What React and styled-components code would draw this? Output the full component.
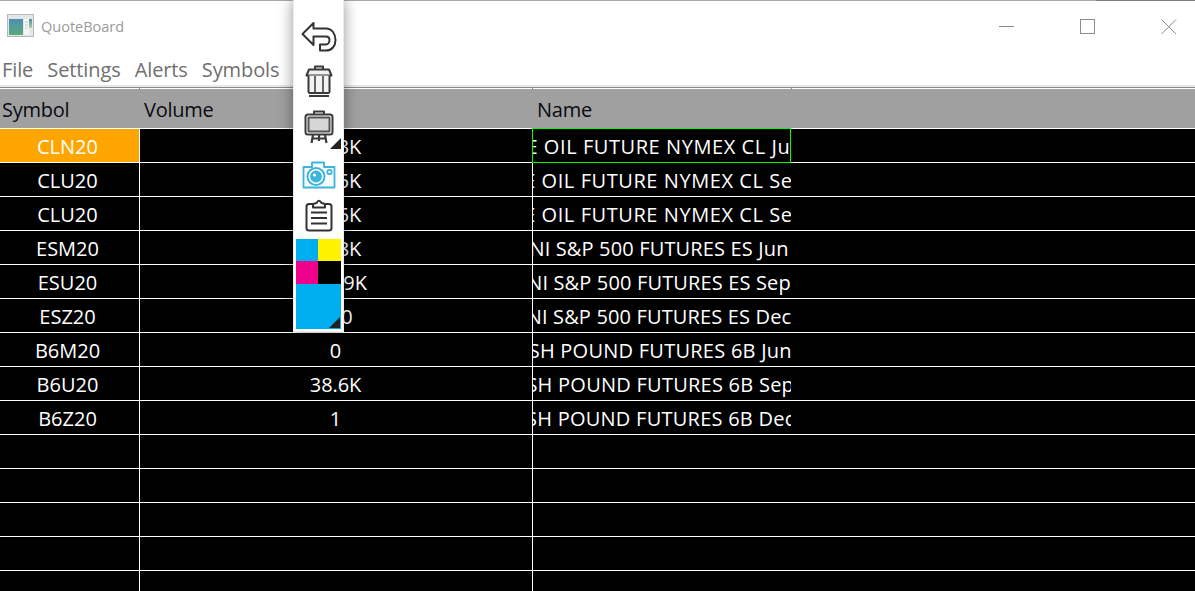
import styled, { createGlobalStyle } from "styled-components";

const GlobalStyle = createGlobalStyle`
    html, body {
        margin: 0;
        padding: 0;
        height: 100%;
        overflow: hidden;
        background: #fff;
    }
    * {
        box-sizing: border-box;
    }
`

const Window = styled.div`
    position: relative;
    display: flex;
    flex-direction: column;
    width: 1195px;
    height: 591px;
    overflow: hidden;
    font-family: "Open Sans", "Noto Sans", sans-serif;
`

const TopEdge = styled.div`
    height: 1px;
    flex: none;
    background: linear-gradient(90deg, #a8a8a8 1096px, #7f7f7f 1096px);
`

const TitleBar = styled.div`
    display: flex;
    align-items: center;
    height: 52px;
    flex: none;
    padding-left: 7px;
`

const AppLogo = styled.svg`
    display: block;
    margin-bottom: 3px;
`

const AppTitle = styled.span`
    margin-left: 7px;
    margin-bottom: 2px;
    font-size: 14.5px;
    color: #9a9a9a;
`

const WindowButtons = styled.div`
    display: flex;
    align-items: center;
    gap: 65px;
    margin-left: auto;
    padding-right: 18px;

    svg {
        display: block;
    }
`

const MenuBar = styled.div`
    display: flex;
    align-items: center;
    gap: 14px;
    height: 34px;
    flex: none;
    padding-left: 2px;
    font-size: 20px;
    letter-spacing: -0.1px;
    color: #6f6f6f;
    border-bottom: 2px solid #e8e8e8;
`

const MenuItem = styled.span`
    display: block;
`

const columns = "139px 393px 259px 1fr";

const HeaderEdge = styled.div`
    display: grid;
    grid-template-columns: ${columns};
    height: 2px;
    flex: none;
    background: #fff;
    border-top: 1px solid #8c8c8c;
`

const EdgeTick = styled.div`
    border-left: ${(p) => (p.$first ? "none" : "1px solid #8c8c8c")};
`

const Row = styled.div`
    position: relative;
    display: grid;
    grid-template-columns: ${columns};
    height: 34px;
    flex: none;
    background: #000;
    border-bottom: 1px solid #fff;
`

const HeaderRow = styled(Row)`
    height: 40px;
    background: #a0a0a0;
`

const HeaderCell = styled.div`
    display: flex;
    align-items: center;
    padding-top: 2px;
    padding-left: ${(p) => p.$pad || 2}px;
    font-size: 20px;
    letter-spacing: -0.25px;
    color: #0a0a14;
`

const Cell = styled.div`
    display: flex;
    align-items: center;
    justify-content: center;
    overflow: hidden;
    white-space: nowrap;
    font-size: 20px;
    color: #fff;
    letter-spacing: ${(p) => p.$spacing || 0}px;
    padding-top: 2px;
    padding-left: ${(p) => p.$nudge || 0}px;
    padding-right: ${(p) => p.$shift || 0}px;
    border-left: ${(p) => (p.$line ? "1px solid #fff" : "none")};
    background: ${(p) => (p.$active ? "#ffa500" : "transparent")};
`

const FocusFrame = styled.div`
    position: absolute;
    grid-column: 3 / 4;
    grid-row: 1;
    inset: -1px 0 -1px 0;
    border: 1px solid #00ff00;
    pointer-events: none;
`

const Toolbar = styled.div`
    position: absolute;
    top: 0;
    left: 293px;
    display: flex;
    flex-direction: column;
    align-items: center;
    width: 51px;
    height: 332px;
    padding: 21px 2px 0;
    background: #fff;
    border: 1px solid #ececec;
    border-top: none;
    box-shadow: 0 0 14px rgba(0, 0, 0, 0.42);
`

const ToolIcon = styled.div`
    position: relative;
    display: flex;
    justify-content: center;
    width: 100%;
    flex: none;
    margin-top: ${(p) => p.$top || 0}px;

    svg {
        display: block;
    }
`

const Corner = styled.span`
    position: absolute;
    right: ${(p) => p.$right}px;
    bottom: ${(p) => p.$bottom}px;
    width: 0;
    height: 0;
    border-left: 11px solid transparent;
    border-bottom: 11px solid #222;
`

const Swatches = styled.div`
    position: relative;
    display: grid;
    grid-template-columns: 22px 23px;
    grid-template-rows: 22px 23px 45px;
    width: 45px;
    flex: none;
    margin-top: 7px;
`

const Swatch = styled.div`
    background: ${(p) => p.$color};
    grid-column: ${(p) => (p.$wide ? "1 / 3" : "auto")};
`

// symbol, volume, name, letter spacing of the name, nudge of the name
const rows = [
    ["CLN20", "28.3K", "CRUDE OIL FUTURE NYMEX CL Jun 2020", 0.57, 3],
    ["CLU20", "10.5K", "CRUDE OIL FUTURE NYMEX CL Sep 2020", 0.57, 3],
    ["CLU20", "10.5K", "CRUDE OIL FUTURE NYMEX CL Sep 2020", 0.57, 3],
    ["ESM20", "71.8K", "E-MINI S&P 500 FUTURES ES Jun 2020", 0.15, 4],
    ["ESU20", "138.9K", "E-MINI S&P 500 FUTURES ES Sep 2020", 0.15, 4],
    ["ESZ20", "100", "E-MINI S&P 500 FUTURES ES Dec 2020", 0.15, 4],
    ["B6M20", "0", "BRITISH POUND FUTURES 6B Jun 2020", 0.25, 0],
    ["B6U20", "38.6K", "BRITISH POUND FUTURES 6B Sep 2020", 0.25, 0],
    ["B6Z20", "1", "BRITISH POUND FUTURES 6B Dec 2020", 0.25, 0],
    ["", "", "", 0, 0],
    ["", "", "", 0, 0],
    ["", "", "", 0, 0],
    ["", "", "", 0, 0],
    ["", "", "", 0, 0],
]

function AppIcon() {
    return (
        <AppLogo width="27" height="23" viewBox="0 0 27 23">
            <defs>
                <linearGradient id="pane" x1="0" y1="0" x2="0" y2="1">
                    <stop offset="0" stopColor="#4f8fb0" />
                    <stop offset="1" stopColor="#58ab7c" />
                </linearGradient>
                <linearGradient id="bar" x1="0" y1="0" x2="0" y2="1">
                    <stop offset="0" stopColor="#4f8f9f" />
                    <stop offset="1" stopColor="#a9cfa9" />
                </linearGradient>
            </defs>
            <rect x="0.5" y="0.5" width="26" height="22" fill="#e4e7e7" stroke="#b4b8b8" />
            <rect x="2" y="5" width="14" height="16" fill="url(#pane)" />
            <rect x="17" y="5" width="5" height="16" fill="#f4f6f4" />
            <path d="M18 8 H21 M18 11 H21 M18 14 H21" stroke="#c4cac6" />
            <rect x="22" y="5" width="3" height="9" fill="url(#bar)" />
        </AppLogo>
    )
}

function BackIcon() {
    return (
        <svg width="36" height="31" viewBox="0 0 36 31" fill="#fff" stroke="#333" strokeWidth="2" strokeLinejoin="round">
            <path d="M1.5 13 L12.5 2 V7.5 H25 C31 7.5 34.5 13 34.5 19 C34.5 25 31 29.5 25 29.5 H19 V23.5 H25 C27 23.5 28.5 21.5 28.5 19 C28.5 16.5 27 15.5 25 15.5 H12.5 V24 Z" />
        </svg>
    )
}

function TrashIcon() {
    return (
        <svg width="28" height="32" viewBox="0 0 28 32" fill="none" stroke="#3a3a3a" strokeWidth="2" strokeLinejoin="round">
            <path d="M10 4 V1.5 H18 V4" />
            <path d="M1.5 10.5 L4 4.5 H24 L26.5 10.5 Z" fill="#f0f0f0" />
            <path d="M3.5 10.5 V27 Q3.5 28 5 28 H23 Q24.5 28 24.5 27 V10.5" fill="#f3f3f3" />
            <path d="M10 11 V27 M18 11 V27" stroke="#666" />
            <path d="M4 31 H24" />
        </svg>
    )
}

function EaselIcon() {
    return (
        <svg width="30" height="34" viewBox="0 0 30 34" fill="none" stroke="#3a3a3a" strokeWidth="2" strokeLinejoin="round">
            <path d="M10 5 V1.5 H20 V5" />
            <rect x="1.5" y="4.5" width="27" height="20" rx="2.5" fill="#fff" />
            <rect x="4.5" y="7.5" width="21" height="14" fill="#d6d6d6" stroke="#555" />
            <path d="M9 25 L7.5 33 M21 25 L22.5 33 M15 25 V31 M8 28.5 H22" strokeWidth="2.2" />
        </svg>
    )
}

function CameraIcon() {
    return (
        <svg width="34" height="28" viewBox="0 0 34 28" fill="none" stroke="#3db4dc" strokeWidth="1.8" strokeLinejoin="round">
            <path d="M1.5 6 H10 V1.5 H22 V6 H32.5 V26.5 H1.5 Z" fill="#f6fbfd" />
            <circle cx="14" cy="15.5" r="8.5" fill="#fff" strokeWidth="2" />
            <circle cx="14" cy="15.5" r="5" fill="#3db4dc" />
            <circle cx="12.5" cy="14" r="1.6" fill="#fff" stroke="none" />
            <circle cx="27.5" cy="11" r="2.2" fill="#fff" />
        </svg>
    )
}

function ClipboardIcon() {
    return (
        <svg width="28" height="34" viewBox="0 0 28 34" fill="#fff" stroke="#333" strokeWidth="2" strokeLinejoin="round">
            <path d="M9 6 H4 Q1.5 6 1.5 8.5 V30 Q1.5 32.5 4 32.5 H24 Q26.5 32.5 26.5 30 V8.5 Q26.5 6 24 6 H19" />
            <path d="M8 9.5 V6 L11.5 5 Q14 0.5 16.5 5 L20 6 V9.5 Z" />
            <path d="M6 14.5 H22 M6 20 H22 M6 25.5 H22" strokeWidth="1.8" />
        </svg>
    )
}

export default function App() {
    return (
        <Window>
            <GlobalStyle />
            <TopEdge />
            <TitleBar>
                <AppIcon />
                <AppTitle>QuoteBoard</AppTitle>
                <WindowButtons>
                    <svg width="16" height="16" viewBox="0 0 16 16" stroke="#8c8c8c"><path d="M0 7.5 H15" /></svg>
                    <svg width="16" height="16" viewBox="0 0 16 16" fill="none" stroke="#8c8c8c"><rect x="0.5" y="0.5" width="14" height="14" /></svg>
                    <svg width="16" height="16" viewBox="0 0 16 16" stroke="#8c8c8c"><path d="M0.5 0.5 L15 15 M15 0.5 L0.5 15" /></svg>
                </WindowButtons>
            </TitleBar>
            <MenuBar>
                <MenuItem>File</MenuItem>
                <MenuItem>Settings</MenuItem>
                <MenuItem>Alerts</MenuItem>
                <MenuItem>Symbols</MenuItem>
            </MenuBar>
            <HeaderEdge>
                <EdgeTick $first />
                <EdgeTick />
                <EdgeTick />
                <EdgeTick />
            </HeaderEdge>
            <HeaderRow>
                <HeaderCell>Symbol</HeaderCell>
                <HeaderCell $pad={5}>Volume</HeaderCell>
                <HeaderCell $pad={5}>Name</HeaderCell>
                <HeaderCell />
            </HeaderRow>
            {rows.map((r, i) => (
                <Row key={i}>
                    <Cell $active={i === 0} $shift={4}>{r[0]}</Cell>
                    <Cell $line $shift={1} $spacing={-0.1}>{r[1]}</Cell>
                    <Cell $line $spacing={r[3]} $nudge={r[4]}>{r[2]}</Cell>
                    <Cell />
                    {i === 0 && <FocusFrame />}
                </Row>
            ))}
            <Toolbar>
                <ToolIcon><BackIcon /></ToolIcon>
                <ToolIcon $top={13}><TrashIcon /></ToolIcon>
                <ToolIcon $top={13}><EaselIcon /><Corner $right={0} $bottom={-5} /></ToolIcon>
                <ToolIcon $top={17}><CameraIcon /></ToolIcon>
                <ToolIcon $top={9}><ClipboardIcon /></ToolIcon>
                <Swatches>
                    <Swatch $color="#00aeef" />
                    <Swatch $color="#fff200" />
                    <Swatch $color="#ec008c" />
                    <Swatch $color="#000" />
                    <Swatch $color="#00aeef" $wide />
                    <Corner $right={1} $bottom={1} />
                </Swatches>
            </Toolbar>
        </Window>
    )
}
